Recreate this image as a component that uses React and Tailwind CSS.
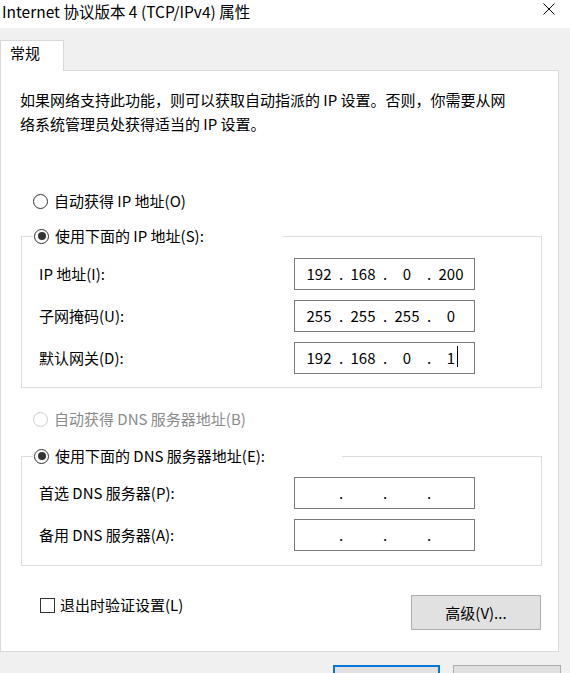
import { Fragment } from 'react'

const FONT = "font-['Noto_Sans_CJK_SC',sans-serif]"

function Radio({ checked, disabled }) {
  return (
    <span
      className={`flex h-[15px] w-[15px] shrink-0 items-center justify-center rounded-full border bg-white ${
        disabled ? 'border-[#cccccc]' : 'border-[#333333]'
      }`}
    >
      {checked && <span className="h-[8px] w-[8px] rounded-full bg-[#333333]" />}
    </span>
  )
}

function RadioRow({ label, checked, disabled }) {
  return (
    <div className={`flex h-[20px] items-center gap-[6px] ${disabled ? 'text-[#8a8a8a]' : 'text-black'}`}>
      <Radio checked={checked} disabled={disabled} />
      <span className="whitespace-nowrap">{label}</span>
    </div>
  )
}

// Windows IP address control: four centred octets split by dots
function IpField({ parts, cursor }) {
  return (
    <div className="flex h-[32px] w-[181px] items-center border border-[#7a7a7a] bg-white pl-[4px] leading-[20px]">
      {parts.map((p, i) => (
        <Fragment key={i}>
          <span className="w-[40px] text-center">
            <span className="relative">
              {p}
              {cursor && i === 3 && (
                <span className="absolute left-full top-[-1px] ml-[2px] h-[21px] w-px bg-black" />
              )}
            </span>
          </span>
          {i < 3 && <span className="w-[4px] text-center">.</span>}
        </Fragment>
      ))}
    </div>
  )
}

function FieldRow({ label, parts, cursor }) {
  return (
    <div className="flex items-center">
      <span className="w-[255px] whitespace-nowrap">{label}</span>
      <IpField parts={parts} cursor={cursor} />
    </div>
  )
}

function GroupBox({ legend, legendWidth, children, className }) {
  return (
    <div className={`relative ml-[20px] w-[521px] border border-[#dcdcdc] ${className}`}>
      <div className={`absolute left-[11px] top-[-11px] bg-white pl-[1px] ${legendWidth}`}>
        <RadioRow label={legend} checked />
      </div>
      {children}
    </div>
  )
}

export default function App() {
  const empty = ['', '', '', '']
  return (
    <div className={`h-[673px] w-[570px] overflow-hidden bg-[#f0f0f0] text-[15px] text-black ${FONT}`}>
      {/* Title bar */}
      <div className="flex h-[28px] items-start justify-between bg-white">
        <span className="pl-[2px] pt-[1px] text-[15.5px] leading-[20px] whitespace-nowrap">
          Internet 协议版本 4 (TCP/IPv4) 属性
        </span>
        <svg className="mr-[15px] mt-[3px]" width="12" height="12" viewBox="0 0 12 12">
          <path d="M0.5 0.5L11.5 11.5M11.5 0.5L0.5 11.5" stroke="#000" strokeWidth="1" />
        </svg>
      </div>

      {/* Tab strip */}
      <div className="pt-[12px]">
        <div className="relative z-10 -mb-px h-[31px] w-[64px] border border-b-0 border-[#d9d9d9] bg-white pl-[9px] pt-[2px] leading-[20px]">
          常规
        </div>

        {/* Tab page */}
        <div className="w-[559px] border border-[#d9d9d9] bg-white pb-[21px]">
          <p className="pl-[19px] pr-[40px] pt-[17px] leading-[24px]">
            如果网络支持此功能，则可以获取自动指派的 IP 设置。否则，你需要从网
            <br />
            络系统管理员处获得适当的 IP 设置。
          </p>

          <div className="mt-[55px] pl-[32px]">
            <RadioRow label="自动获得 IP 地址(O)" />
          </div>

          <GroupBox
            legend="使用下面的 IP 地址(S):"
            legendWidth="w-[250px]"
            className="mt-[25px] pb-[13px] pl-[17px] pt-[21px]"
          >
            <div className="flex flex-col gap-[10px]">
              <FieldRow label="IP 地址(I):" parts={['192', '168', '0', '200']} />
              <FieldRow label="子网掩码(U):" parts={['255', '255', '255', '0']} />
              <FieldRow label="默认网关(D):" parts={['192', '168', '0', '1']} cursor />
            </div>
          </GroupBox>

          <div className="mt-[21px] pl-[32px]">
            <RadioRow label="自动获得 DNS 服务器地址(B)" disabled />
          </div>

          <GroupBox
            legend="使用下面的 DNS 服务器地址(E):"
            legendWidth="w-[309px]"
            className="mt-[27px] pb-[14px] pl-[17px] pt-[20px]"
          >
            <div className="flex flex-col gap-[10px]">
              <FieldRow label="首选 DNS 服务器(P):" parts={empty} />
              <FieldRow label="备用 DNS 服务器(A):" parts={empty} />
            </div>
          </GroupBox>

          <div className="mt-[29px] flex items-start justify-between pl-[39px] pr-[17px]">
            <label className="flex h-[20px] items-center gap-[5px]">
              <span className="h-[15px] w-[15px] border border-[#333333] bg-white" />
              <span>退出时验证设置(L)</span>
            </label>
            <button className="h-[35px] w-[130px] border border-[#adadad] bg-[#e1e1e1] leading-[20px]">
              高级(V)...
            </button>
          </div>
        </div>
      </div>

      {/* Dialog buttons (their labels fall below the visible area) */}
      <div className="mt-[13px] flex justify-end gap-[13px] pr-[9px]">
        <button aria-label="确定" className="h-[34px] w-[107px] border-2 border-[#0078d7] bg-[#e1e1e1]" />
        <button aria-label="取消" className="h-[34px] w-[108px] border border-[#adadad] bg-[#e1e1e1]" />
      </div>
    </div>
  )
}
